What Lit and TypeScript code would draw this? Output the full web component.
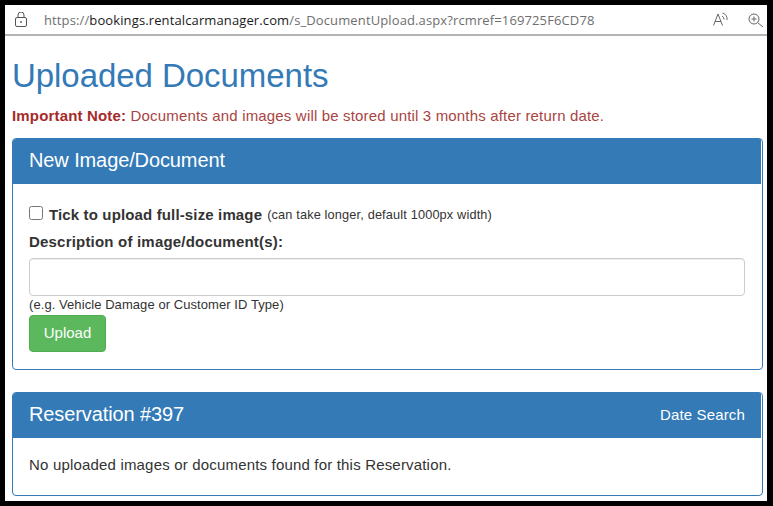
import { LitElement, html, css } from "lit";
import { customElement } from "lit/decorators.js";

@customElement("app-root")
export class AppRoot extends LitElement {
  static styles = css`
    :host { display: block; width: 773px; height: 506px; box-sizing: border-box; background: #000; padding: 5px 6px 5px 5px; font-family: "Liberation Sans", Arial, sans-serif; color: #333; }
    .win { height: 496px; background: #fff; display: flex; flex-direction: column; overflow: hidden; }
    .bar { height: 31px; flex: none; box-sizing: border-box; border-bottom: 2px solid #b4b4b4; display: flex; align-items: center; padding: 0 4px 0 10px; color: #6e6e6e; }
    .lock { width: 12px; height: 15px; margin-right: 17px; flex: none; }
    .url { flex: 1; white-space: nowrap; letter-spacing: 0.12px; font-family: "Open Sans", sans-serif; font-size: 13px; }
    .url b { font-weight: 400; color: #1a1a1a; }
    .read { width: 15px; height: 15px; margin-right: 20px; flex: none; }
    .zoom { width: 15px; height: 15px; flex: none; }
    .main { padding: 0 4px 0 7px; }
    h1 { margin: 18px 0 0; color: #337ab7; font-size: 33px; font-weight: 400; line-height: 44px; letter-spacing: -0.05px; }
    .note { margin: 8px 0 0; color: #a94442; font-size: 15px; letter-spacing: 0.17px; line-height: 20px; white-space: nowrap; }
    .note b { color: #a52a2a; }
    .panel { border: 1px solid #337ab7; border-radius: 4px; overflow: hidden; }
    .head { box-sizing: border-box; background: #337ab7; color: #fff; display: flex; justify-content: space-between; align-items: center; padding: 0 16px 2px; height: 45px; margin-right: 1px; }
    .title { font-size: 20px; letter-spacing: -0.11px; }
    .link { font-size: 15px; letter-spacing: 0.15px; }
    .body { padding: 16px 17px 17px 16px; }
    .tick { display: flex; align-items: center; height: 28px; white-space: nowrap; }
    input[type=checkbox] { width: 14px; height: 14px; margin: 0 6px 3px 0; }
    .tick b { font-size: 15px; letter-spacing: 0.14px; }
    small { font-size: 12.75px; letter-spacing: 0.15px; margin-left: 5px; }
    label { display: block; font-weight: 700; font-size: 15px; letter-spacing: 0.2px; line-height: 20px; margin-top: 4px; }
    .field { display: block; box-sizing: border-box; width: 100%; height: 38px; margin-top: 6px; border: 1px solid #ccc; border-radius: 4px; box-shadow: inset 0 1px 1px rgba(0,0,0,.075); }
    .hint { font-size: 13px; letter-spacing: 0.07px; line-height: 18px; }
    button { display: block; background: #5cb85c; border: 1px solid #4cae4c; color: #fff; font: 15px "Liberation Sans", Arial, sans-serif; border-radius: 4px; width: 77px; height: 37px; padding: 0 0 2px; margin-top: 1px; }
    .first { margin-top: 12px; }
    .second { margin-top: 22px; height: 102px; }
    .empty { padding: 17px 16px; font-size: 15px; letter-spacing: 0.18px; line-height: 20px; }
  `;

  render() {
    return html`<div class="win">
      <div class="bar">
        <svg class="lock" viewBox="0 0 12 15" fill="none" stroke="#555" stroke-width="1"><rect x=".5" y="5.5" width="11" height="9" rx="1.5"/><path d="M3 5.5V3a3 3 0 0 1 6 0v2.5"/><circle cx="6" cy="10" r=".9" fill="#555" stroke="none"/></svg>
        <span class="url">https://<b>bookings.rentalcarmanager.com</b>/s_DocumentUpload.aspx?rcmref=169725F6CD78</span>
        <svg class="read" viewBox="0 0 15 15" fill="none" stroke="#666" stroke-width="1"><path d="M.5 13.5 5 2l4.5 11.5M2 9.5h6"/><path d="M9 4a3.5 3.5 0 0 1 2 3.5M9.5 1a6 6 0 0 1 4.5 7"/></svg>
        <svg class="zoom" viewBox="0 0 15 15" fill="none" stroke="#666" stroke-width="1"><circle cx="6" cy="7" r="5"/><path d="M3.5 7h5M6 4.5v5M9.6 10.6 15 15"/></svg>
      </div>
      <div class="main">
        <h1>Uploaded Documents</h1>
        <p class="note"><b>Important Note:</b> Documents and images will be stored until 3 months after return date.</p>
        <section class="panel first">
          <div class="head"><span class="title">New Image/Document</span></div>
          <div class="body">
            <div class="tick"><input type="checkbox" /><b>Tick to upload full-size image</b><small>(can take longer, default 1000px width)</small></div>
            <label>Description of image/document(s):</label>
            <input class="field" type="text" />
            <div class="hint">(e.g. Vehicle Damage or Customer ID Type)</div>
            <button>Upload</button>
          </div>
        </section>
        <section class="panel second">
          <div class="head"><span class="title">Reservation #397</span><span class="link">Date Search</span></div>
          <div class="empty">No uploaded images or documents found for this Reservation.</div>
        </section>
      </div>
    </div>`;
  }
}
